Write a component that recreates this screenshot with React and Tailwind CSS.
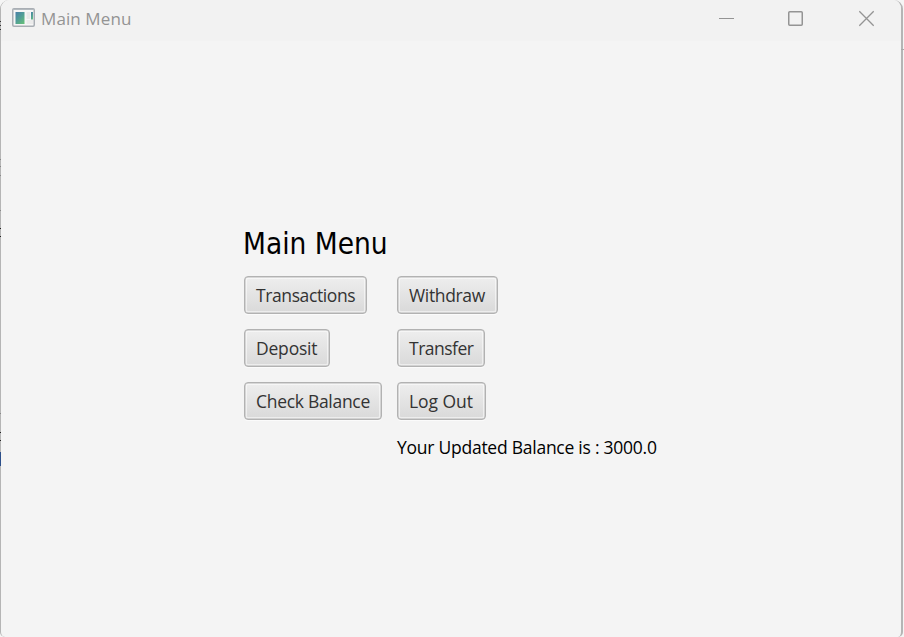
const buttonBase =
  "flex h-[38px] items-center justify-self-start whitespace-nowrap rounded-[4px] border border-[#b2b2b2] bg-linear-to-b from-[#eeeeee] to-[#d9d9d9] pl-[11px] pt-px text-[17.5px] leading-none text-[#333333] shadow-[inset_0_0_0_0.5px_#b8b8b8,inset_0_0_0_2px_rgba(255,255,255,0.5),0_1px_0_#fbfbfb]";

function MenuButton({ className, children }) {
  return (
    <button type="button" className={`${buttonBase} ${className}`}>
      {children}
    </button>
  );
}

function AppIcon() {
  return (
    <svg width="23" height="19" viewBox="0 0 23 19" className="shrink-0">
      <defs>
        <linearGradient id="pane" x1="0" y1="0" x2="0.8" y2="1">
          <stop offset="0" stopColor="#4a7fa8" />
          <stop offset="0.5" stopColor="#509c98" />
          <stop offset="1" stopColor="#65bd7c" />
        </linearGradient>
      </defs>
      <rect x="0.75" y="0.75" width="21.5" height="17.5" rx="1.2" fill="#f6f6f6" stroke="#a9aeb4" strokeWidth="1.5" />
      <path d="M1 1.5h21" stroke="#b4babf" />
      <rect x="3.5" y="4" width="9" height="12" fill="url(#pane)" />
      <rect x="14.5" y="4" width="3.5" height="7" fill="#e9e9e9" />
      <rect x="14.5" y="12" width="6.5" height="4" fill="#ebebeb" />
      <rect x="19" y="4" width="2" height="7.5" fill="url(#pane)" />
    </svg>
  );
}

function TitleBar() {
  return (
    <header className="flex h-[41px] items-start justify-between bg-[#f2f2f2] pl-[11px] text-[#949494]">
      <div className="flex items-start gap-1.5 pt-2">
        <AppIcon />
        <span className="whitespace-nowrap text-[17px] leading-[22px] tracking-[0.1px]">Main Menu</span>
      </div>
      <svg width="182" height="36" viewBox="0 0 182 36" fill="none" stroke="#949494">
        <path d="M0 18.5h15" />
        <rect x="69.75" y="11.75" width="13.5" height="13.5" rx="1" strokeWidth="1.5" />
        <path d="M140.3 11.3l14.4 14.4M154.7 11.3l-14.4 14.4" strokeWidth="1.3" />
      </svg>
    </header>
  );
}

/* Slivers of the desktop content behind the window, visible along its edges. */
function DesktopEdges() {
  return (
    <svg
      className="pointer-events-none absolute inset-0"
      width="904"
      height="637"
      viewBox="0 0 904 637"
      shapeRendering="crispEdges"
    >
      <path d="M0 21h1v1h-1zM0 25h1v1h-1zM0 29h1v1h-1z" fill="#333333" />
      <path d="M0 159h1v1h-1zM0 166h1v1h-1zM0 175h1v1h-1zM0 210h1v1h-1zM0 413h1v1h-1z" fill="#888888" />
      <path d="M0 228h1v1h-1zM0 236h1v1h-1zM0 432h1v1h-1zM0 440h1v1h-1z" fill="#222222" />
      <path d="M0 452h1v14h-1z" fill="#2c4f8a" />
      <path d="M901 49h3v1h-3z" fill="#a8a8a8" />
    </svg>
  );
}

export default function App() {
  return (
    <div className="relative h-[637px] w-[904px] overflow-hidden bg-[#f5f5f5] font-['Open_Sans','Noto_Sans',sans-serif]">
      <div className="flex h-full w-[903px] flex-col overflow-hidden rounded-t-[9px] rounded-b-[5px] border-l border-r-2 border-[#b5b5b5] bg-[#f4f4f4]">
        <TitleBar />
        <main className="flex flex-1 items-center justify-center pl-px pt-[6px]">
          <div className="grid grid-cols-[138px_262px] gap-[15px]">
            <h1 className="col-span-2 h-9 whitespace-nowrap font-['DejaVu_Sans_Condensed','DejaVu_Sans',sans-serif] text-[29.5px] font-normal leading-[38px] text-black [font-stretch:condensed] -indent-px">
              Main Menu
            </h1>
            <MenuButton className="w-[123px] tracking-[-0.4px]">Transactions</MenuButton>
            <MenuButton className="w-[101px] tracking-[-0.35px]">Withdraw</MenuButton>
            <MenuButton className="w-[86px] tracking-[-0.2px]">Deposit</MenuButton>
            <MenuButton className="w-[88px] tracking-[-0.5px]">Transfer</MenuButton>
            <MenuButton className="w-[138px] tracking-[-0.3px]">Check Balance</MenuButton>
            <MenuButton className="w-[89px] tracking-[-0.05px]">Log Out</MenuButton>
            <p className="col-start-2 whitespace-nowrap text-[17.5px] leading-6 tracking-[-0.25px] text-black">
              Your Updated Balance is : 3000.0
            </p>
          </div>
        </main>
      </div>
      <DesktopEdges />
    </div>
  );
}
